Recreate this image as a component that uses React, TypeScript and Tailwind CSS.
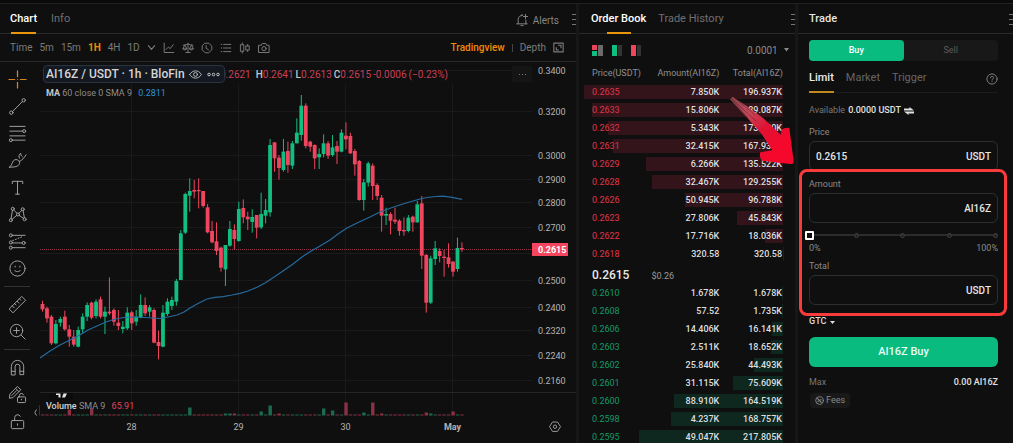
import { useState } from 'react';
import type { ReactNode } from 'react';
import { clsx } from 'clsx';

// Spot trading screen: chart panel, order book and the order form.

/** Hourly candles: [bodyTop, bodyBottom, high, low, up] in thirds of a pixel below y=80 */
const CANDLES: [number, number, number, number, 0 | 1][] = [
  [672, 688, 662, 695, 0], [685, 715, 680, 728, 0], [710, 790, 705, 795, 0], [732, 790, 720, 793, 1],
  [717, 728, 710, 740, 1], [710, 748, 692, 752, 0], [748, 770, 735, 800, 0], [770, 794, 750, 800, 0],
  [750, 800, 740, 802, 1], [710, 748, 700, 760, 1], [675, 710, 667, 723, 1], [668, 713, 665, 718, 0],
  [665, 708, 658, 715, 1], [658, 710, 650, 715, 0], [695, 710, 680, 762, 1], [695, 700, 592, 705, 0],
  [690, 725, 685, 737, 0], [728, 738, 690, 750, 0], [740, 747, 723, 760, 1], [698, 745, 682, 750, 1],
  [697, 730, 692, 750, 0], [710, 725, 690, 737, 1], [675, 713, 643, 715, 1], [675, 700, 652, 708, 0],
  [682, 695, 675, 710, 1], [690, 788, 685, 790, 0], [786, 798, 752, 838, 0], [698, 800, 675, 802, 1],
  [665, 702, 655, 708, 1], [660, 678, 650, 690, 1], [603, 665, 597, 677, 1], [460, 600, 450, 600, 1],
  [342, 458, 338, 462, 1], [333, 347, 295, 395, 1], [330, 335, 300, 355, 0], [330, 333, 295, 385, 0],
  [333, 378, 333, 383, 0], [382, 457, 372, 460, 0], [453, 487, 423, 490, 0], [484, 513, 427, 525, 0],
  [503, 563, 500, 575, 0], [495, 568, 495, 618, 1], [447, 497, 423, 500, 1], [450, 477, 433, 508, 0],
  [387, 483, 365, 485, 1], [384, 412, 358, 430, 0], [410, 418, 395, 450, 0], [411, 426, 388, 458, 1],
  [405, 443, 405, 475, 0], [402, 442, 338, 447, 1], [390, 407, 357, 430, 1], [195, 397, 177, 410, 1],
  [187, 235, 187, 275, 0], [233, 264, 225, 299, 0], [215, 270, 177, 275, 1], [213, 255, 185, 278, 0],
  [190, 257, 183, 267, 1], [158, 190, 115, 190, 1], [77, 165, 45, 182, 1], [77, 198, 70, 205, 0],
  [185, 200, 182, 215, 0], [195, 235, 193, 267, 0], [222, 232, 205, 267, 1], [190, 222, 163, 232, 1],
  [190, 227, 183, 237, 0], [202, 225, 165, 230, 1], [198, 215, 183, 252, 0], [158, 215, 148, 217, 1],
  [167, 178, 127, 208, 0], [168, 220, 158, 222, 0], [213, 253, 207, 287, 0], [243, 360, 240, 362, 0],
  [307, 360, 297, 392, 1], [250, 308, 245, 320, 1], [257, 318, 250, 360, 0], [315, 348, 310, 360, 0],
  [353, 407, 345, 455, 0], [402, 407, 383, 435, 1], [402, 422, 397, 463, 0], [419, 425, 383, 432, 0],
  [422, 453, 418, 467, 0], [450, 454, 412, 467, 0], [413, 453, 405, 457, 1], [410, 427, 407, 455, 0],
  [373, 427, 363, 428, 1], [370, 527, 348, 567, 0], [525, 668, 522, 698, 0], [535, 668, 527, 672, 1],
  [505, 537, 483, 555, 1], [513, 528, 505, 547, 0], [530, 534, 510, 590, 0], [532, 552, 490, 563, 0],
  [545, 575, 543, 590, 0], [504, 567, 473, 575, 1], [504, 508, 487, 515, 0],
];

/** Volume spikes by candle index, the rest are flat */
const VOLUME: Record<number, number> = {
  6: 6, 11: 7, 33: 8, 41: 2, 42: 2, 43: 2, 49: 4, 51: 10, 53: 2, 63: 7, 65: 5,
  68: 13, 72: 3, 74: 13, 76: 2, 86: 3, 87: 2, 92: 4,
};

const MA_LINE =
  '40,358 50,351 60,345 70,340 78,336 88,330 97,326 106,322 115,319 124,317.5 133,317 145,317.5 160,318.5 168,317 177,315 184,312 190,308 198,303.5 207,299 215,297.3 223,296.6 232,295 240,293.3 248,291 257,287.3 265,283 273,277.7 283,271 293,264 302,257 310,251.7 320,246 330,240 338,234 347,228 357,223 370,217 380,212 390,208.3 402,204.3 413,201 420,199 427,197.5 436,196.5 443,196.2 452,197.3 462,199.4';

// 0.2600 sits under the last price tag, so it only gets a grid line
const PRICE_AXIS: [string, number][] = [
  ['0.3400', 70], ['0.3200', 111], ['0.3000', 155], ['0.2900', 179], ['0.2800', 202], ['0.2700', 227],
  ['', 253], ['0.2500', 280], ['0.2400', 307], ['0.2320', 330], ['0.2240', 355], ['0.2160', 380],
];

const TIME_AXIS: [string, number][] = [['28', 131], ['29', 238], ['30', 345], ['May', 452]];

/** Order book rows: price, amount, total, cumulative size in thousands */
type Row = [string, string, string, number];
const ASKS: Row[] = [
  ['0.2635', '7.850K', '196.937K', 196.9],
  ['0.2633', '15.806K', '189.087K', 189.1],
  ['0.2632', '5.343K', '173.280K', 173.3],
  ['0.2631', '32.415K', '167.937K', 167.9],
  ['0.2629', '6.266K', '135.522K', 135.5],
  ['0.2628', '32.467K', '129.255K', 129.3],
  ['0.2626', '50.945K', '96.788K', 96.8],
  ['0.2623', '27.806K', '45.843K', 45.8],
  ['0.2622', '17.716K', '18.036K', 18],
  ['0.2618', '320.58', '320.58', 0.3],
];
const BIDS: Row[] = [
  ['0.2610', '1.678K', '1.678K', 1.7],
  ['0.2608', '57.52', '1.735K', 1.7],
  ['0.2606', '14.406K', '16.141K', 16.1],
  ['0.2603', '2.511K', '18.652K', 18.7],
  ['0.2602', '25.840K', '44.493K', 44.5],
  ['0.2601', '31.115K', '75.609K', 75.6],
  ['0.2600', '88.910K', '164.519K', 164.5],
  ['0.2598', '4.237K', '168.757K', 168.8],
  ['0.2595', '49.047K', '217.805K', 217.8],
];

function Icon({ size = 20, children, className }: { size?: number; children: ReactNode; className?: string }) {
  return (
    <svg
      width={size}
      height={size}
      viewBox="0 0 20 20"
      fill="none"
      stroke="currentColor"
      strokeWidth="1"
      strokeLinecap="round"
      strokeLinejoin="round"
      className={clsx('shrink-0', className)}
      aria-hidden
    >
      {children}
    </svg>
  );
}

/** Drawing tools, three groups split by a rule */
const TOOLS: { name: string; icon: ReactNode; active?: boolean }[][] = [
  [
    {
      name: 'Crosshair',
      active: true,
      icon: <path d="M10 1v6M10 13v6M1 10h6M13 10h6M10 10h.01" stroke="#d9851b" strokeWidth="1.300" />,
    },
    {
      name: 'Trend line',
      icon: <><circle cx="3.5" cy="16.5" r="1.8" /><circle cx="16.5" cy="3.5" r="1.8" /><path d="M4.9 15.1 15.1 4.9" /></>,
    },
    {
      name: 'Fib retracement',
      icon: <><path d="M2 2.500h16M2 7.500h13.500M2 12.500h16M4.500 17H18" /><circle cx="17" cy="7.500" r="1.600" /><circle cx="3" cy="17" r="1.600" /></>,
    },
    {
      name: 'Brush',
      icon: <path d="M1.500 17c2.500-1.500 2.500-4 4-6.500 1.500-2 4.500-2 6 0s.5 4.500-2 5.500c-2.500 1-5.500 1-8 1ZM12 11c3-1 5-4 7-7M12 7.500c-1-2-.5-4 1.500-5-.2 1.500.3 2.500 1.500 3.500" />,
    },
    { name: 'Text', icon: <path d="M4.500 6V3.500h11V6M10 3.500v13.500M8 17h4" /> },
    {
      name: 'Patterns',
      icon: <><circle cx="5" cy="4" r="1.600" /><circle cx="15.500" cy="4.500" r="1.600" /><circle cx="10.500" cy="10" r="1.600" /><circle cx="3" cy="16" r="1.600" /><circle cx="17.500" cy="15" r="1.600" /><path d="m6 5.300 3.500 3.400M14.500 5.700l-3 3M4.700 5.700 3.200 14.400M15.900 6.100l1.300 7.300M4.400 15l4.700-4M11.900 11l4.300 3.200" /></>,
    },
    {
      name: 'Forecast',
      icon: <><circle cx="3" cy="3.500" r="1.600" /><circle cx="3" cy="11" r="1.600" /><circle cx="3" cy="16.500" r="1.600" /><circle cx="16.500" cy="11.500" r="1.600" /><path d="M5 3.500h13M5 11.500h9.500M5 16.500h13" /><path d="M5 9l10-4" strokeDasharray="1 2" /></>,
    },
    {
      name: 'Emoji',
      icon: <><circle cx="10" cy="10" r="8" /><path d="M7.500 7.500v1M12.500 7.500v1M7 12c1.300 1.800 4.700 1.800 6 0" /></>,
    },
  ],
  [
    {
      name: 'Measure',
      icon: <path d="M1.500 14.500 14.500 1.500l4 4-13 13zM4.500 11.500l2 2M7 9l1.500 1.500M9.500 6.500l2 2M12 4l1.500 1.500" />,
    },
    { name: 'Zoom in', icon: <><circle cx="9" cy="9" r="6.500" /><path d="m14 14 4 4M9 6v6M6 9h6" /></> },
  ],
  [
    {
      name: 'Magnet',
      icon: <path d="M3.500 17.500V9a6.500 6.500 0 0 1 13 0v8.500h-4V9a2.500 2.500 0 0 0-5 0v8.500zM3.500 14h4M12.500 14h4" />,
    },
    {
      name: 'Stay in drawing mode',
      icon: <><path d="M1.500 13.500 2 9.500 10 1.500l3.500 3.500-8 8zM8 3.500 11.500 7M4 11l5-5" /><rect x="10" y="12.500" width="8.500" height="6" rx="1" /><path d="M12 12.500v-1.500a2.200 2.200 0 0 1 4.300-.6M14.200 15v.6" /></>,
    },
    {
      name: 'Lock drawings',
      icon: <><rect x="3.500" y="9" width="13" height="8.500" rx="1" /><path d="M7 9V6a3.200 3.200 0 0 1 6-1.500M10 12.500v1.500" /></>,
    },
    { name: 'Hide drawings', icon: <><path d="M2 10c3-6 13-6 16 0-3 6-13 6-16 0Z" /><circle cx="10" cy="10" r="2.500" /></> },
  ],
];

const CHART_ACTIONS: { name: string; icon: ReactNode }[] = [
  { name: 'Indicators', icon: <path d="M2 2v15.500h16M5 12.500l4-4 3 2.500 5-6.500" /> },
  {
    name: 'Compare',
    icon: <path d="M10 2v15M6.500 17.500h7M2 5.500c3 0 5-2 8-2s5 2 8 2M4.500 5.500 1.500 11.500h6zM15.500 5.500l-3 6h6zM1.500 11.500c.5 2.500 5.500 2.500 6 0M12.500 11.500c.5 2.500 5.500 2.500 6 0" />,
  },
  { name: 'Alarm', icon: <path d="M7 2h6l5 5v6l-5 5H7l-5-5V7zM8.500 6v4.500l4 2.500" /> },
  { name: 'Templates', icon: <path d="M6 4h12M6 10h12M6 16h12M2 4h1M2 10h1M2 16h1" /> },
  { name: 'Candle style', icon: <path d="M5.500 1.500v3M5.500 15.500v3M3 4.500h5v11H3zM14.500 4v2.500M14.500 13.500v2.500M12 6.500h5v7h-5z" /> },
  {
    name: 'Snapshot',
    icon: <><path d="M1.500 5.500h4L7 2.500h6l1.500 3h4V17.500h-17z" /><circle cx="10" cy="11" r="3.500" /></>,
  },
];

function Grip() {
  return (
    <svg width="5" height="12" viewBox="0 0 5 12" stroke="#777" strokeWidth="1" aria-hidden>
      <path d="M1 1.500h4M1 6.500h4M1 11.500h4" />
    </svg>
  );
}

function ToolRail() {
  return (
    <div className="flex w-[34px] shrink-0 flex-col items-center pt-1 text-[#a5a5a5]">
      {TOOLS.map((group, g) => (
        <div key={g} className={clsx('flex flex-col', g > 0 && 'mt-1 border-t border-[#333] pt-1')}>
          {group.map((tool) => (
            <button
              key={tool.name}
              type="button"
              aria-label={tool.name}
              aria-pressed={Boolean(tool.active)}
              className="flex h-[27px] w-[26px] items-center justify-center"
            >
              <Icon size={19}>{tool.icon}</Icon>
            </button>
          ))}
        </div>
      ))}
    </div>
  );
}

function CandleChart() {
  return (
    <svg viewBox="34 62 542 381" className="block w-full" aria-label="AI16Z / USDT 1h chart">
      {/* grid */}
      <g stroke="#1a1a1a" strokeWidth="1">
        {PRICE_AXIS.map(([, y]) => (
          <path key={y} d={`M40 ${y + 0.5}H532`} />
        ))}
        {TIME_AXIS.map(([label, x]) => (
          <path key={label} d={`M${x + 0.5} 84V415`} />
        ))}
      </g>
      <path d="M40 392.500H576" stroke="#252525" />

      {/* volume */}
      {CANDLES.map(([, , , , up], i) => {
        const h = VOLUME[i] ?? 1;
        return (
          <rect key={i} x={40.9 + i * 4.462} y={415.5 - h} width="3.400" height={h} fill={up ? '#1c6b50' : '#8a3145'} />
        );
      })}

      <path d="M40 249.500H532" stroke="#93304a" strokeDasharray="1 1" />

      {CANDLES.map(([top, bottom, high, low, up], i) => {
        const x = 42.5 + i * 4.462;
        const fill = up ? '#12bd80' : '#f0455f';
        return (
          <g key={i} fill={fill}>
            <rect x={x - 0.5} y={80 + high / 3} width="1" height={(low - high) / 3} />
            <rect x={x - 1.9} y={80 + top / 3} width="3.800" height={Math.max(1.2, (bottom - top) / 3)} />
          </g>
        );
      })}
      <polyline points={MA_LINE} fill="none" stroke="#256a9f" strokeWidth="1.200" strokeLinejoin="round" />

      {/* axes */}
      <g fill="#b4b4b4" fontSize="9">
        {PRICE_AXIS.filter(([label]) => label).map(([label, y]) => (
          <text key={label} x="538" y={y + 4}>{label}</text>
        ))}
        {TIME_AXIS.map(([label, x]) => (
          <text key={label} x={x + 0.5} y="430" textAnchor="middle" fontWeight={label === 'May' ? 700 : 400}>{label}</text>
        ))}
      </g>
      <rect x="532" y="243" width="36" height="13" fill="#f5455f" />
      <text x="538" y="253" fill="#fff" fontSize="9" fontWeight="700">0.2615</text>

      {/* axis settings */}
      <g stroke="#999" fill="none">
        <path d="M552.500 422h5l3 4.700-3 4.700h-5l-3-4.700z" />
        <circle cx="555" cy="426.700" r="1.700" />
      </g>

      {/* pane logo and collapse arrow */}
      <path d="M49 393h24v7H49z" fill="#0b0b0b" />
      <path d="M56 393.500h4.500v4h-2v-2.500H56zM63.500 393.500h3.500l-2 4h-3z" fill="#e5e5e5" />
      <path d="M36.500 409.500 34.800 412.500l1.700 3" stroke="#999" fill="none" />
      <path d="M39.500 405v10.500" stroke="#333" />
    </svg>
  );
}

function ChartLegend() {
  return (
    <div className="absolute left-[9px] top-[3px] flex flex-col gap-1 text-[#8d8d8d]">
      <div className="flex items-center gap-[2px] whitespace-nowrap text-[10px] text-[#c93f58]">
        <div className="z-10 -mr-[7px] flex h-[18px] w-[182px] items-center justify-between rounded-sm border border-[#2b3240] bg-[#141821] pl-[2px] pr-1">
          <span className="text-[12px] font-medium text-[#d4d4d4]">AI16Z / USDT · 1h · BloFin</span>
          <Icon size={13} className="text-[#b5b5b5]">
            <path d="M1 10c4-7.500 14-7.500 18 0-4 7.500-14 7.500-18 0Z" strokeWidth="1.500" />
            <circle cx="10" cy="10" r="3" strokeWidth="1.500" />
          </Icon>
          <svg width="13" height="5" viewBox="0 0 13 5" fill="none" stroke="#c5c5c5" aria-hidden>
            <circle cx="2" cy="2.500" r="1.300" /><circle cx="6.500" cy="2.500" r="1.300" /><circle cx="11" cy="2.500" r="1.300" />
          </svg>
        </div>
        <span>0.2621</span>
        <span className="pl-[3px]"><b className="font-medium text-[#c4c4c4]">H</b>0.2641</span>
        <span><b className="font-medium text-[#c4c4c4]">L</b>0.2613</span>
        <span><b className="font-medium text-[#c4c4c4]">C</b>0.2615</span>
        <span>-0.0006</span>
        <span>(−0.23%)</span>
      </div>
      <div className="pl-[3px] text-[9px] leading-3">
        <b className="text-[#c4c4c4]">MA</b> 60 close 0 SMA 9 <span className="pl-1 text-[#2f8fd8]">0.2811</span>
      </div>
    </div>
  );
}

function ChartPanel() {
  return (
    <section className="flex min-w-0 flex-1 flex-col bg-[#0f0f0f]">
      <header className="flex h-[30px] shrink-0 items-center border-b border-[#2a2a2a] pl-[10px] text-[11px]">
        <button type="button" className="relative flex h-full items-center pt-[2px] font-medium text-white">
          Chart
          <span className="absolute inset-x-px -bottom-px h-[2px] bg-[#e8960c]" />
        </button>
        <button type="button" className="ml-[14px] pt-[2px] text-[#6f6f6f]">Info</button>
        <button type="button" className="ml-auto mr-3 flex items-center gap-1 pt-[3px] text-[10px] text-[#858585]">
          <Icon size={14}>
            <path d="M2.500 15.500h15M4.500 15.500V9a5.500 5.500 0 0 1 6-5.500M15.500 10v5.500M8.500 18h3M10 3.500V2M15 2v6M12 5h6" strokeWidth="1.400" />
          </Icon>
          Alerts
        </button>
        <Grip />
      </header>

      <div className="flex h-[28px] shrink-0 items-center justify-between border-b border-[#2a2a2a] pl-[10px] pr-3 text-[10px] text-[#7b7b7b]">
        <div className="flex items-center gap-[7px]">
          <span>Time</span>
          <button type="button">5m</button>
          <button type="button">15m</button>
          <button type="button" className="font-bold text-[#f08a0a]">1H</button>
          <button type="button">4H</button>
          <button type="button">1D</button>
          <button type="button" aria-label="More intervals">
            <Icon size={9}><path d="m3 6 7 8 7-8" strokeWidth="2.500" /></Icon>
          </button>
          {CHART_ACTIONS.map((a) => (
            <button key={a.name} type="button" aria-label={a.name}>
              <Icon size={12}><g strokeWidth="1.600">{a.icon}</g></Icon>
            </button>
          ))}
        </div>
        <div className="flex items-center gap-[7px]">
          <button type="button" className="font-medium text-[#f08a0a]">Tradingview</button>
          <span className="h-[8px] w-px bg-[#444]" />
          <button type="button" className="leading-[15px]">Depth</button>
          <button type="button" aria-label="Fullscreen">
            <Icon size={11}>
              <path d="M1.500 2h17v16h-17zM10 6h4.500v4.500M6 10v4.500h4" strokeWidth="2" />
            </Icon>
          </button>
        </div>
      </div>

      <div className="flex min-h-0 flex-1">
        <ToolRail />
        <div className="relative min-w-0 flex-1">
          <CandleChart />
          <ChartLegend />
          <button
            type="button"
            aria-label="More"
            className="absolute right-[44px] top-1 flex h-4 w-[20px] items-center justify-center gap-[2px] bg-[#151515]"
          >
            <i className="size-px bg-[#777]" />
            <i className="size-px bg-[#777]" />
            <i className="size-px bg-[#777]" />
          </button>
          <div className="absolute left-3 top-[338px] text-[9px] leading-3 text-[#8d8d8d]">
            <span className="font-medium text-[#d4d4d4]">Volume</span> SMA 9{' '}
            <span className="pl-1 text-[#e0455f]">65.91</span>
          </div>
        </div>
      </div>
    </section>
  );
}

function BookRow({ row, side }: { row: Row; side: 'ask' | 'bid' }) {
  const [price, amount, total, size] = row;
  const width = (size / (side === 'ask' ? 197 : 301)) * 100;
  return (
    <tr className="relative h-[18px]">
      <td className={clsx('pl-2', side === 'ask' ? 'text-[#e03548]' : 'text-[#159a68]')}>
        <span
          className={clsx('absolute inset-y-[2px] right-0 -z-10', side === 'ask' ? 'bg-[#32141a]' : 'bg-[#0e271f]')}
          style={{ width: `${width}%` }}
        />
        {price}
      </td>
      <td className="text-right font-medium text-[#dedede]">{amount}</td>
      <td className="pr-px text-right font-medium text-[#dedede]">{total}</td>
    </tr>
  );
}

/** Brush-like pointer from the book to the amount field */
function PointerArrow() {
  return (
    <svg
      className="pointer-events-none absolute left-[150px] top-[90px] z-20"
      width="66"
      height="72"
      viewBox="447 282 198 216"
      aria-hidden
    >
      <defs>
        <linearGradient id="brush" gradientUnits="userSpaceOnUse" x1="450" y1="292" x2="600" y2="440">
          <stop offset="0" stopColor="#a8505a" stopOpacity=".8" />
          <stop offset=".35" stopColor="#c4475a" />
          <stop offset=".65" stopColor="#e01232" />
          <stop offset="1" stopColor="#f5082c" />
        </linearGradient>
      </defs>
      <path
        d="M450 298 458 290 500 318 550 355 603 405 604 389Q615 382 628 384L641 484Q641 494 631 492L546 482Q536 470 541 457L577 451 545 402 500 352Z"
        fill="url(#brush)"
      />
      <path d="M452 293 530 365M455 299l50 56M462 292l62 52" stroke="#1a0d0f" strokeOpacity=".5" strokeWidth="2" />
    </svg>
  );
}

function OrderBook() {
  return (
    <section className="relative flex w-[216px] shrink-0 flex-col bg-[#0f0f0f]">
      <header className="flex h-[30px] shrink-0 items-center border-b border-[#2a2a2a] pl-[12px] text-[11px]">
        <button type="button" className="relative flex h-full items-center pt-[2px] font-medium text-white">
          Order Book
          <span className="absolute -bottom-px left-1/2 h-[2px] w-6 -translate-x-1/2 bg-[#e8960c]" />
        </button>
        <button type="button" className="ml-3 pt-[2px] text-[#6f6f6f]">Trade History</button>
        <span className="ml-auto"><Grip /></span>
      </header>

      <div className="flex h-[32px] shrink-0 items-center gap-[9px] pl-[13px] pr-[6px]">
        <button type="button" aria-label="Both sides" className="grid grid-cols-2 gap-px">
          <i className="size-[5px] bg-[#e8455c]" />
          <i className="row-span-2 w-[5px] bg-[#6b6b6b]" />
          <i className="size-[5px] bg-[#12bd80]" />
        </button>
        <button type="button" aria-label="Bids only" className="flex gap-px">
          <i className="h-[11px] w-[5px] bg-[#12bd80]" />
          <i className="h-[11px] w-[4px] bg-[#333]" />
        </button>
        <button type="button" aria-label="Asks only" className="flex gap-px">
          <i className="h-[11px] w-[5px] bg-[#f0455f]" />
          <i className="h-[11px] w-[4px] bg-[#333]" />
        </button>
        <label className="relative ml-auto flex items-center text-[#8a8a8a]">
          <select
            aria-label="Price step"
            className="w-[37px] appearance-none bg-transparent text-[10px] outline-none"
            defaultValue="0.0001"
          >
            <option>0.0001</option>
          </select>
          <svg width="5" height="4" viewBox="0 0 5 4" fill="currentColor" aria-hidden><path d="M0 0h5L2.500 3.500z" /></svg>
        </label>
      </div>

      <div className="pl-[5px] pr-3">
        <table className="isolate w-full table-fixed border-collapse text-[9px] leading-none">
          <thead>
            <tr className="h-[17px] text-[#909090]">
              <th className="w-[30%] whitespace-nowrap pb-[2px] pl-2 text-left font-normal">Price(USDT)</th>
              <th className="w-[38%] whitespace-nowrap pb-[2px] text-right font-normal">Amount(AI16Z)</th>
              <th className="whitespace-nowrap pb-[2px] text-right font-normal">Total(AI16Z)</th>
            </tr>
          </thead>
          <tbody>
            {ASKS.map((row) => <BookRow key={row[0]} row={row} side="ask" />)}
            <tr className="h-[21px]">
              <td colSpan={3} className="pl-2 pt-[2px]">
                <span className="text-[12px] font-medium text-[#e8e8e8]">0.2615</span>
                <span className="pl-[22px] text-[#9a9a9a]">$0.26</span>
              </td>
            </tr>
            {BIDS.map((row) => <BookRow key={row[0]} row={row} side="bid" />)}
          </tbody>
        </table>
      </div>
      <PointerArrow />
    </section>
  );
}

interface FieldProps {
  id: string;
  label: string;
  unit: string;
  value: string;
  onChange: (v: string) => void;
}

function Field({ id, label, unit, value, onChange }: FieldProps) {
  return (
    <div>
      <label htmlFor={id} className="block h-[18px] pt-[3px] text-[9px] leading-3 text-[#8a8a8a]">{label}</label>
      <div className="flex h-[30px] items-center rounded-md border border-[#2c2f30] px-[6px] text-[10px] font-medium text-[#e6e6e6]">
        <input
          id={id}
          value={value}
          onChange={(e) => onChange(e.target.value)}
          className="min-w-0 flex-1 bg-transparent outline-none"
        />
        <span>{unit}</span>
      </div>
    </div>
  );
}

function TradePanel() {
  const [price, setPrice] = useState('0.2615');
  const [amount, setAmount] = useState('');
  const [total, setTotal] = useState('');
  const [percent, setPercent] = useState(0);

  return (
    <section className="flex w-[215px] shrink-0 flex-col bg-[#0f0f0f]">
      <header className="flex h-[30px] shrink-0 items-center justify-between border-b border-[#2a2a2a] pl-[11px] text-[11px] font-medium text-[#e6e6e6]">
        <span className="pt-[2px]">Trade</span>
        <Grip />
      </header>

      <div className="flex flex-col pl-[11px] pr-[15px] pt-[6px]">
        <div className="grid h-[21px] grid-cols-2 rounded bg-[#181818] text-[9px]">
          <button type="button" className="rounded bg-[#0abb7f] pt-px font-medium text-white">Buy</button>
          <button type="button" className="pt-px text-[#5c5c5c]">Sell</button>
        </div>

        <div className="flex h-[32px] items-center gap-3 border-b border-[#1d1d1d] text-[11px] text-[#666]">
          <button type="button" className="relative flex h-full items-center pt-1 font-medium text-[#ececec]">
            Limit
            <span className="absolute inset-x-0 -bottom-px h-[2px] bg-[#c08a1e]" />
          </button>
          <button type="button" className="pt-1">Market</button>
          <button type="button" className="pt-1">Trigger</button>
          <button type="button" aria-label="Help" className="ml-auto pt-1 text-[#888]">
            <Icon size={12}>
              <circle cx="10" cy="10" r="8.500" strokeWidth="1.500" />
              <path d="M7.500 8a2.500 2.500 0 1 1 3.500 2.300c-.8.400-1 .8-1 1.700M10 14.500v.2" strokeWidth="1.500" />
            </Icon>
          </button>
        </div>

        <div className="mt-[10px] flex h-[16px] items-center gap-[3px] text-[9px] text-[#777]">
          Available
          <span className="font-medium text-[#e0e0e0]">0.0000 USDT</span>
          <button type="button" aria-label="Transfer">
            <svg width="10" height="8" viewBox="0 0 10 8" fill="#e0e0e0" aria-hidden>
              <path d="M0 1.500h5.500V0L10 3.400H0zM10 6.500H4.500V8L0 4.600h10z" />
            </svg>
          </button>
        </div>

        <div className="mt-1">
          <Field id="price" label="Price" unit="USDT" value={price} onChange={setPrice} />
        </div>

        {/* amount block with the highlight frame around it */}
        <div className="relative pt-1">
          <div className="pointer-events-none absolute -bottom-[11px] -left-[10px] -right-[9px] -top-[2px] z-10 rounded-lg border-[3px] border-[#f93c3b]" />
          <Field id="amount" label="Amount" unit="AI16Z" value={amount} onChange={setAmount} />

          <div className="relative -ml-1 mt-[7px] flex h-[10px] items-center">
            <div className="pointer-events-none absolute inset-x-0 flex items-center justify-between pl-[2px]">
              {[0, 25, 50, 75, 100].map((p) => (
                <i key={p} className="size-[5px] rounded-full border border-[#484848] bg-[#0f0f0f]" />
              ))}
            </div>
            <input
              type="range"
              aria-label="Percent of balance"
              min={0}
              max={100}
              value={percent}
              onChange={(e) => setPercent(Number(e.target.value))}
              className="relative h-[2px] w-full appearance-none bg-[#333]/80 outline-none [&::-webkit-slider-thumb]:size-[9px] [&::-webkit-slider-thumb]:appearance-none [&::-webkit-slider-thumb]:rounded-[1px] [&::-webkit-slider-thumb]:border-2 [&::-webkit-slider-thumb]:border-white [&::-webkit-slider-thumb]:bg-[#0f0f0f]"
            />
          </div>
          <div className="mt-[3px] flex h-[12px] items-center justify-between text-[9px] text-[#8a8a8a]">
            <span>0%</span>
            <span>100%</span>
          </div>

          <div className="pt-[2px]">
            <Field id="total" label="Total" unit="USDT" value={total} onChange={setTotal} />
          </div>
        </div>

        <button type="button" className="mt-[11px] flex h-3 items-center gap-1 text-[9px] font-medium text-[#dedede]">
          GTC
          <svg width="5" height="3" viewBox="0 0 5 3" fill="currentColor" aria-hidden><path d="M0 0h5L2.500 3z" /></svg>
        </button>

        <button type="button" className="mt-[9px] h-[30px] rounded-md bg-[#0abb7f] text-[11px] font-medium text-[#e9fbf4]">
          AI16Z Buy
        </button>

        <div className="mt-[10px] flex h-3 items-center justify-between text-[9px] text-[#777]">
          Max
          <span className="font-medium text-[#e0e0e0]">0.00 AI16Z</span>
        </div>
        <button
          type="button"
          className="ml-px mt-1 flex h-[15px] w-fit items-center gap-[2px] rounded-sm bg-[#191919] px-[5px] text-[9px] text-[#8a8a8a]"
        >
          <Icon size={9}>
            <circle cx="10" cy="10" r="8.500" strokeWidth="2" />
            <path d="m6 6 8 8M7 11.500v1M13 7.500v1" strokeWidth="2.500" />
          </Icon>
          Fees
        </button>
      </div>
    </section>
  );
}

export default function App() {
  return (
    <main className="flex h-screen flex-col overflow-hidden bg-[#171717] font-['Roboto',sans-serif]">
      <div className="h-1 shrink-0 border-b border-[#222] bg-[#0a0a0a]" />
      <div className="flex min-h-0 flex-1 gap-[3px]">
        <ChartPanel />
        <OrderBook />
        <TradePanel />
      </div>
    </main>
  );
}
